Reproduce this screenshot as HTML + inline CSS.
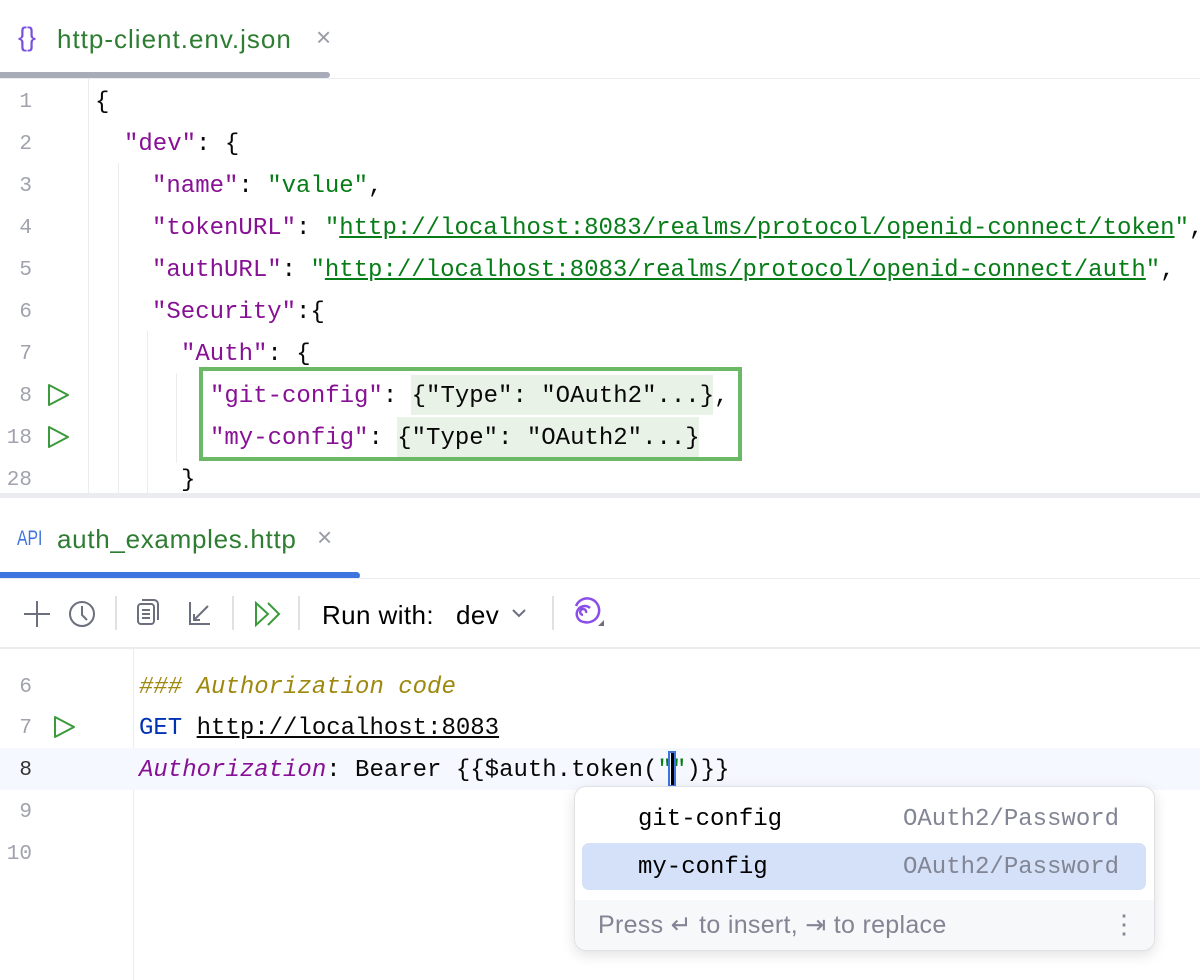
<!DOCTYPE html>
<html><head><meta charset="utf-8"><style>
*{margin:0;padding:0;box-sizing:border-box}
body{width:1200px;height:980px;background:#fff;position:relative;overflow:hidden;font-family:"Liberation Sans",sans-serif}
.mono{font-family:"Liberation Mono",monospace;font-size:24px;white-space:pre}
.ln{position:absolute;font-family:"Liberation Mono",monospace;font-size:21px;color:#a0a3ad;text-align:right;width:32px;left:0}
.code{position:absolute;left:0;height:42px;line-height:42px}
.k{color:#871094}.s{color:#067d17}.u{color:#067d17;text-decoration:underline}.p{color:#080808}
.abs{position:absolute}
.ui{font-size:26px;letter-spacing:.4px}
</style></head><body>
<!-- top tab -->
<div class="abs" style="left:18px;top:22px;font-size:27px;color:#7a4fe0">{}</div>
<div class="abs ui" style="left:57px;top:24px;color:#2e7d32;letter-spacing:1px">http-client.env.json</div>
<div class="abs" style="left:316px;top:22px;font-size:26px;color:#9a9ca6">×</div>
<div class="abs" style="left:0;top:72px;width:330px;height:6px;background:#a8abb8;border-radius:0 3px 3px 0"></div>
<div class="abs" style="left:0;top:78px;width:1200px;height:1px;background:#ebecf0"></div>
<div class="abs" style="left:88px;top:79px;width:1px;height:415px;background:#ebecf0"></div>
<div class="abs" style="left:118px;top:163px;width:1px;height:331px;background:#ebecf0"></div>
<div class="abs" style="left:147px;top:331px;width:1px;height:163px;background:#ebecf0"></div>
<div class="abs" style="left:176px;top:373px;width:1px;height:90px;background:#ebecf0"></div>
<div class="abs" style="left:0;top:493px;width:1200px;height:5px;background:#ebecf0"></div>

<div class="ln" style="top:91px">1</div>
<div class="ln" style="top:133px">2</div>
<div class="ln" style="top:175px">3</div>
<div class="ln" style="top:217px">4</div>
<div class="ln" style="top:259px">5</div>
<div class="ln" style="top:301px">6</div>
<div class="ln" style="top:343px">7</div>
<div class="ln" style="top:385px">8</div>
<div class="ln" style="top:427px">18</div>
<div class="ln" style="top:469px">28</div>

<div class="code mono p" style="left:95px;top:82px">{</div>
<div class="code mono" style="left:124px;top:124px"><span class="k">"dev"</span><span class="p">: {</span></div>
<div class="code mono" style="left:152px;top:166px"><span class="k">"name"</span><span class="p">: </span><span class="s">"value"</span><span class="p">,</span></div>
<div class="code mono" style="left:152px;top:208px"><span class="k">"tokenURL"</span><span class="p">: </span><span class="s">"</span><span class="u">http://localhost:8083/realms/protocol/openid-connect/token</span><span class="s">"</span><span class="p">,</span></div>
<div class="code mono" style="left:152px;top:250px"><span class="k">"authURL"</span><span class="p">: </span><span class="s">"</span><span class="u">http://localhost:8083/realms/protocol/openid-connect/auth</span><span class="s">"</span><span class="p">,</span></div>
<div class="code mono" style="left:152px;top:292px"><span class="k">"Security"</span><span class="p">:{</span></div>
<div class="code mono" style="left:181px;top:334px"><span class="k">"Auth"</span><span class="p">: {</span></div>
<div class="abs" style="left:411px;top:375px;width:302px;height:40px;background:#e8f2e6"></div>
<div class="abs" style="left:397px;top:417px;width:302px;height:40px;background:#e8f2e6"></div>
<div class="code mono" style="left:210px;top:376px"><span class="k">"git-config"</span><span class="p">: </span><span class="p">{"Type": "OAuth2"...},</span></div>
<div class="code mono" style="left:210px;top:418px"><span class="k">"my-config"</span><span class="p">: {"Type": "OAuth2"...}</span></div>
<div class="code mono p" style="left:181px;top:460px">}</div>
<div class="abs" style="left:199px;top:367px;width:543px;height:94px;border:4px solid #6bb866"></div>
<svg class="abs" style="left:46px;top:383px" width="26" height="24"><path d="M3 2 L22 12 L3 22 Z" fill="none" stroke="#3b9a3b" stroke-width="2" stroke-linejoin="round"/></svg>
<svg class="abs" style="left:46px;top:425px" width="26" height="24"><path d="M3 2 L22 12 L3 22 Z" fill="none" stroke="#3b9a3b" stroke-width="2" stroke-linejoin="round"/></svg>

<!-- bottom tab -->
<div class="abs" style="left:17px;top:527px;font-size:21px;color:#3d74e0;transform:scaleX(.75);transform-origin:left">API</div>
<div class="abs ui" style="left:57px;top:524px;color:#2e7d32;letter-spacing:.7px">auth_examples.http</div>
<div class="abs" style="left:317px;top:522px;font-size:26px;color:#9a9ca6">×</div>
<div class="abs" style="left:0;top:572px;width:360px;height:7px;background:#3d74e0;border-radius:0 4px 4px 0"></div>
<div class="abs" style="left:0;top:578px;width:1200px;height:1px;background:#ebecf0"></div>
<!-- toolbar -->
<svg class="abs" style="left:0;top:590px" width="620" height="56" fill="none" stroke="#6c707e" stroke-width="2">
<path d="M24 24h26M37 11v26"/>
<circle cx="82" cy="24" r="12"/><path d="M82 16v9l5 5"/>
<path d="M116 6v34" stroke="#dfe1e5"/>
<rect x="138" y="14" width="16" height="20" rx="3"/><path d="M142 10h12a4 4 0 0 1 4 4v16M142 20h8M142 24h8M142 28h8"/>
<path d="M190 12v22h20M194 30l14-14M200 30h-6v-6" />
<path d="M233 6v34" stroke="#dfe1e5"/>
<path d="M256 13v22l12-11zM268 13l11 11-11 11" stroke="#3b9a3b"/>
<path d="M299 6v34" stroke="#dfe1e5"/>
<path d="M513 20l6 6 6-6"/>
<path d="M553 6v34" stroke="#dfe1e5"/>
<path d="M590 18a8 8 0 1 0 -6 14a12 12 0 1 0 -8 -16M583 25a3 3 0 1 1 3 -2" stroke="#8a4fe8" stroke-width="2.5"/>
<path d="M604 30v6h-6z" fill="#6c707e" stroke="none"/>
</svg>
<div class="abs ui" style="left:322px;top:600px;color:#000">Run with:</div>
<div class="abs ui" style="left:456px;top:600px;color:#000">dev</div>
<div class="abs" style="left:0;top:647px;width:1200px;height:2px;background:#ebecf0"></div>
<div class="abs" style="left:133px;top:649px;width:1px;height:331px;background:#ebecf0"></div>
<div class="abs" style="left:0;top:748px;width:1200px;height:42px;background:#f5f8fe"></div>

<div class="ln" style="top:676px">6</div>
<div class="ln" style="top:717px">7</div>
<div class="ln" style="top:759px;color:#333">8</div>
<div class="ln" style="top:801px">9</div>
<div class="ln" style="top:843px">10</div>
<svg class="abs" style="left:52px;top:715px" width="26" height="24"><path d="M3 2 L22 12 L3 22 Z" fill="none" stroke="#3b9a3b" stroke-width="2" stroke-linejoin="round"/></svg>
<div class="code mono" style="left:139px;top:667px;color:#9e880d;font-style:italic">### Authorization code</div>
<div class="code mono" style="left:139px;top:708px"><span style="color:#0033b3">GET</span> <span style="text-decoration:underline;color:#080808">http://localhost:8083</span></div>
<div class="code mono" style="left:139px;top:750px"><span class="k" style="font-style:italic">Authorization</span><span class="p">: Bearer {{$auth.token(</span><span class="s">""</span><span class="p">)}}</span></div>
<div class="abs" style="left:668px;top:751px;width:8px;height:36px;border:2px solid #3d74e0"></div>
<div class="abs" style="left:671px;top:753px;width:3px;height:32px;background:#000"></div>

<!-- popup -->
<div class="abs" style="left:574px;top:786px;width:581px;height:165px;background:#fff;border:1px solid #dfe1e5;border-radius:12px;box-shadow:0 4px 14px rgba(0,0,0,.12);overflow:hidden">
 <div class="abs" style="left:7px;top:56px;width:564px;height:47px;background:#d5e1f9;border-radius:7px"></div>
 <div class="abs mono" style="left:63px;top:19px;font-size:24px;color:#000">git-config</div>
 <div class="abs mono" style="left:328px;top:19px;font-size:24px;color:#818594">OAuth2/Password</div>
 <div class="abs mono" style="left:63px;top:67px;font-size:24px;color:#000">my-config</div>
 <div class="abs mono" style="left:328px;top:67px;font-size:24px;color:#818594">OAuth2/Password</div>
 <div class="abs" style="left:0;top:113px;width:581px;height:52px;background:#f7f8fa"></div>
 <div class="abs" style="left:23px;top:123px;font-size:25px;letter-spacing:.3px;color:#818594">Press ↵ to insert, ⇥ to replace</div>
 <div class="abs" style="left:536px;top:122px;font-size:26px;color:#818594">⋮</div>
</div>
</body></html>
